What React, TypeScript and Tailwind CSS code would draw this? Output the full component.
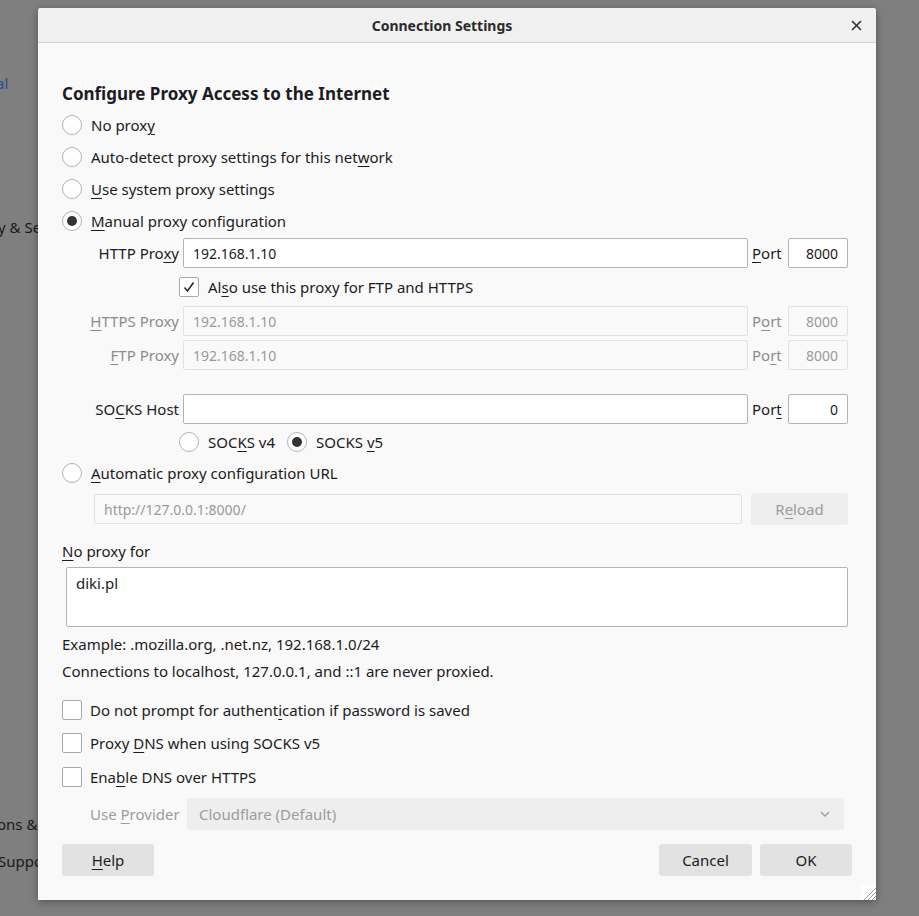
import type { ReactNode } from "react";

const FONT = "font-['Noto_Sans',sans-serif]";

function Mn({ children }: { children: ReactNode }) {
  return <span className="underline decoration-1 underline-offset-[3px]">{children}</span>;
}

function Radio({ checked = false }: { checked?: boolean }) {
  return (
    <span className="flex h-[20px] w-[20px] shrink-0 items-center justify-center rounded-full border border-[#b4b4b4] bg-white">
      {checked ? <span className="h-[10px] w-[10px] rounded-full bg-[#333333]" /> : null}
    </span>
  );
}

function Checkbox({ checked = false }: { checked?: boolean }) {
  return (
    <span className="flex h-[20px] w-[20px] shrink-0 items-center justify-center rounded-[2px] border border-[#a9a9a9] bg-white">
      {checked ? (
        <svg width="14" height="14" viewBox="0 0 14 14" fill="none">
          <path d="M2.5 7.5 L5.5 11 L11.5 2.5" stroke="#2b2b2b" strokeWidth="1.6" />
        </svg>
      ) : null}
    </span>
  );
}

function Field({
  value,
  disabled = false,
  right = false,
  className = "",
}: {
  value: string;
  disabled?: boolean;
  right?: boolean;
  className?: string;
}) {
  return (
    <div
      className={`flex h-[30px] items-center rounded-[2px] border px-[9px] text-[14px] ${
        disabled ? "border-[#e2e2e2] bg-[#f9f9f9] text-[#9a9a9a]" : "border-[#b3b3b3] bg-white text-[#1c1b22]"
      } ${right ? "justify-end" : ""} ${className}`}
    >
      {value}
    </div>
  );
}

type ProxyRowProps = {
  label: ReactNode;
  value: string;
  portLabel: ReactNode;
  port: string;
  disabled?: boolean;
  className?: string;
};

function ProxyRow({ label, value, portLabel, port, disabled = false, className = "" }: ProxyRowProps) {
  const text = disabled ? "text-[#8c8c8c]" : "text-[#1c1b22]";
  return (
    <div className={`flex h-[30px] items-center ${className}`}>
      <span className={`w-[117px] shrink-0 text-right ${text}`}>{label}</span>
      <Field value={value} disabled={disabled} className="ml-[4px] flex-1" />
      <span className={`ml-[4px] w-[31px] shrink-0 ${text}`}>{portLabel}</span>
      <Field value={port} disabled={disabled} right className="ml-[5px] w-[60px]" />
    </div>
  );
}

function RadioRow({ label, checked = false, className = "" }: { label: ReactNode; checked?: boolean; className?: string }) {
  return (
    <div className={`flex items-center gap-[9px] ${className}`}>
      <Radio checked={checked} />
      <span>{label}</span>
    </div>
  );
}

function CheckRow({ label, className = "" }: { label: ReactNode; className?: string }) {
  return (
    <div className={`flex h-[30px] items-center gap-[8px] ${className}`}>
      <Checkbox />
      <span>{label}</span>
    </div>
  );
}

export default function App() {
  return (
    <div className={`relative h-[916px] w-[919px] overflow-hidden bg-[#7f7f7f] text-[15px] text-[#1c1b22] ${FONT}`}>
      {/* page behind the dialog, only the strip left of it shows */}
      <div className="absolute left-0 top-0 h-full w-[38px] overflow-hidden whitespace-nowrap text-[15px] text-[#1a1a1a]">
        <span className="absolute left-[-4px] top-[72px] text-[#1f4f8c]">al</span>
        <span className="absolute left-[-2px] top-[216px]">y &amp; Se</span>
        <span className="absolute left-[-3px] top-[813px]">ons &amp; T</span>
        <span className="absolute left-[-2px] top-[850px]">Suppo</span>
      </div>

      <div className="pl-[38px] pt-[8px]">
        <div className="relative flex h-[892px] w-[838px] flex-col rounded-t-[3px] bg-[#f9f9f9] shadow-[0_2px_8px_rgba(0,0,0,0.35)]">
          <div className="relative flex h-[35px] items-center justify-center rounded-t-[3px] border-b border-[#d4d4d4] bg-[#f0f0f0] pr-[30px]">
            <span className="text-[14px] font-bold text-[#2b2b2b]">Connection Settings</span>
            <svg className="absolute right-[14px] top-[12px]" width="11" height="11" viewBox="0 0 11 11">
              <path d="M1 1 L10 10 M10 1 L1 10" stroke="#2b2b2b" strokeWidth="1.5" />
            </svg>
          </div>

          <div className="flex flex-col pl-[24px] pr-[28px]">
            <h1 className="mt-[40px] h-[22px] text-[17px] font-bold leading-[22px] text-[#1c1b22]">
              Configure Proxy Access to the Internet
            </h1>

            <RadioRow className="h-[32px] mt-[4px]" label={<>No prox<Mn>y</Mn></>} />
            <RadioRow className="h-[32px]" label={<>Auto-detect proxy settings for this net<Mn>w</Mn>ork</>} />
            <RadioRow className="h-[32px]" label={<><Mn>U</Mn>se system proxy settings</>} />
            <RadioRow className="h-[32px]" checked label={<><Mn>M</Mn>anual proxy configuration</>} />

            <ProxyRow
              className="mt-[1px]"
              label={<>HTTP Pro<Mn>x</Mn>y</>}
              value="192.168.1.10"
              portLabel={<><Mn>P</Mn>ort</>}
              port="8000"
            />

            <div className="mt-[4px] flex h-[30px] items-center gap-[9px] pl-[117px]">
              <Checkbox checked />
              <span>Al<Mn>s</Mn>o use this proxy for FTP and HTTPS</span>
            </div>

            <ProxyRow
              className="mt-[4px]"
              disabled
              label={<><Mn>H</Mn>TTPS Proxy</>}
              value="192.168.1.10"
              portLabel={<>P<Mn>o</Mn>rt</>}
              port="8000"
            />
            <ProxyRow
              className="mt-[4px]"
              disabled
              label={<><Mn>F</Mn>TP Proxy</>}
              value="192.168.1.10"
              portLabel={<>Po<Mn>r</Mn>t</>}
              port="8000"
            />

            <ProxyRow
              className="mt-[24px]"
              label={<>SO<Mn>C</Mn>KS Host</>}
              value=""
              portLabel={<>Por<Mn>t</Mn></>}
              port="0"
            />

            <div className="mt-[4px] flex h-[28px] items-center pl-[117px]">
              <RadioRow label={<>SOC<Mn>K</Mn>S v4</>} />
              <RadioRow className="ml-[12px]" checked label={<>SOCKS <Mn>v</Mn>5</>} />
            </div>

            <RadioRow className="mt-[2px] h-[30px]" label={<><Mn>A</Mn>utomatic proxy configuration URL</>} />

            <div className="mt-[5px] flex h-[32px] items-center pl-[32px]">
              <Field value="http://127.0.0.1:8000/" disabled className="flex-1" />
              <div className="ml-[9px] flex h-[32px] w-[97px] items-center justify-center rounded-[3px] bg-[#ededed] text-[#9c9c9c]">
                R<Mn>e</Mn>load
              </div>
            </div>

            <div className="mt-[16px] h-[20px] leading-[20px]">
              <Mn>N</Mn>o proxy for
            </div>
            <div className="ml-[4px] mt-[6px] h-[60px] rounded-[2px] border border-[#b3b3b3] bg-white px-[9px] pt-[4px] text-[15px]">
              diki.pl
            </div>

            <div className="mt-[7px] h-[20px] leading-[20px]">Example: .mozilla.org, .net.nz, 192.168.1.0/24</div>
            <div className="mt-[7px] h-[20px] leading-[20px]">Connections to localhost, 127.0.0.1, and ::1 are never proxied.</div>

            <CheckRow className="mt-[14px]" label={<>Do not prompt for authent<Mn>i</Mn>cation if password is saved</>} />
            <CheckRow className="mt-[3px]" label={<>Proxy <Mn>D</Mn>NS when using SOCKS v5</>} />
            <CheckRow className="mt-[4px]" label={<>Ena<Mn>b</Mn>le DNS over HTTPS</>} />

            <div className="mt-[6px] flex h-[32px] items-center pl-[28px] pr-[4px] text-[#9c9c9c]">
              <span className="w-[97px] shrink-0 whitespace-nowrap">Use <Mn>P</Mn>rovider</span>
              <div className="flex h-[32px] flex-1 items-center justify-between rounded-[3px] bg-[#eeeeee] pl-[12px] pr-[14px]">
                <span>Cloudflare (Default)</span>
                <svg width="10" height="6" viewBox="0 0 10 6">
                  <path d="M1 1 L5 5 L9 1" stroke="#a5a5a5" strokeWidth="1.6" fill="none" />
                </svg>
              </div>
            </div>

            <div className="-mr-[4px] mt-[14px] flex h-[32px] items-center justify-between">
              <div className="flex h-[32px] w-[92px] items-center justify-center rounded-[3px] bg-[#e2e2e2]">
                <Mn>H</Mn>elp
              </div>
              <div className="flex gap-[8px]">
                <div className="flex h-[32px] w-[93px] items-center justify-center rounded-[3px] bg-[#e2e2e2]">Cancel</div>
                <div className="flex h-[32px] w-[92px] items-center justify-center rounded-[3px] bg-[#e2e2e2]">OK</div>
              </div>
            </div>
          </div>

          {/* resize grip */}
          <svg className="absolute bottom-0 right-0" width="15" height="15" viewBox="0 0 15 15">
            <rect width="15" height="15" fill="#ffffff" />
            <path d="M15 3 L3 15 M15 7 L7 15 M15 11 L11 15" stroke="#9a9a9a" strokeWidth="1" />
          </svg>
        </div>
      </div>
    </div>
  );
}
